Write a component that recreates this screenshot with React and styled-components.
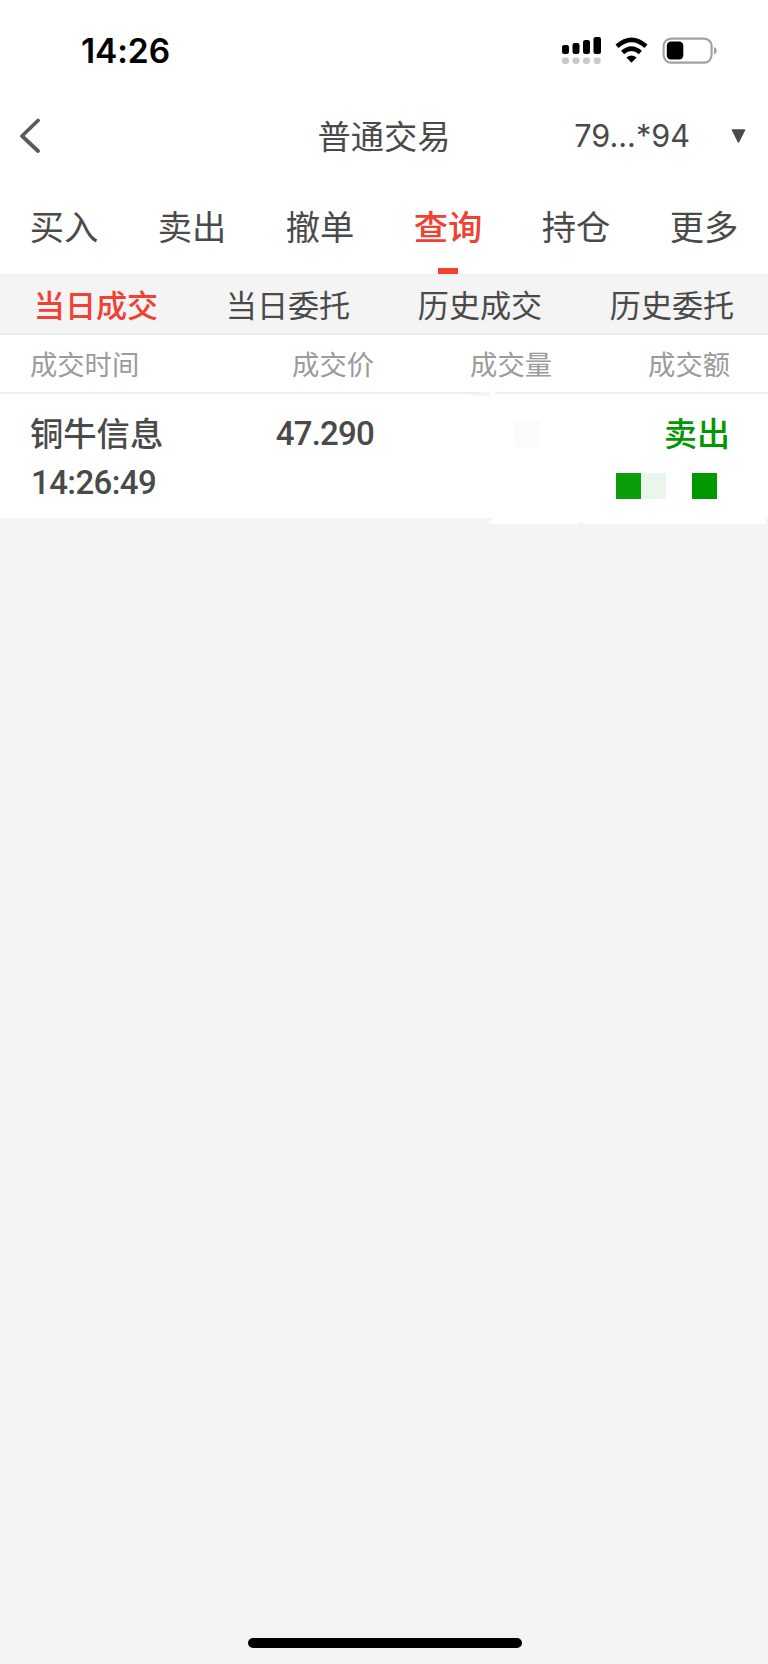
import React from "react";
import styled, { createGlobalStyle } from "styled-components";

const GlobalStyle = createGlobalStyle`
  * { box-sizing: border-box; }
  body {
    margin: 0;
    background: #f4f4f4;
    color: #4a4a4a;
    font-family: Inter, "Noto Sans CJK SC", sans-serif;
  }
`;

const Screen = styled.main`
  width: 768px;
  height: 1664px;
  display: flex;
  flex-direction: column;
  overflow: hidden;
  background: #f4f4f4;
`;

const StatusBar = styled.header`
  height: 100px;
  flex: none;
  display: flex;
  align-items: center;
  justify-content: space-between;
  padding: 2px 51px 0 81px;
  background: #fff;
`;

const Clock = styled.time`
  font: 600 33.5px/40px Inter, sans-serif;
  letter-spacing: -0.1px;
  color: #000;
`;

const StatusIcons = styled.svg`
  width: 156px;
  height: 30px;
  display: block;
  margin-top: -3px;
`;

const NavBar = styled.nav`
  height: 80px;
  flex: none;
  display: grid;
  grid-template-columns: 1fr auto 1fr;
  align-items: center;
  padding: 0 22px 9px 18px;
  background: #fff;
`;

const BackButton = styled.button`
  width: 24px;
  height: 36px;
  padding: 0;
  border: 0;
  background: none;
  svg { display: block; }
`;

const Title = styled.h1`
  margin: 0;
  padding: 0 0 2px 4px;
  font: 400 33.3px/48px "Noto Sans CJK SC", sans-serif;
`;

const Account = styled.div`
  display: flex;
  align-items: center;
  justify-content: flex-end;
  gap: 41px;
  font: 400 30.6px/40px Inter, sans-serif;
  svg { display: block; }
`;

const Tabs = styled.div`
  height: 94px;
  flex: none;
  display: grid;
  grid-template-columns: repeat(6, 1fr);
  background: #fff;
`;

const Tab = styled.button`
  display: flex;
  flex-direction: column;
  align-items: center;
  justify-content: space-between;
  padding: 20px 0 0;
  border: 0;
  background: none;
  color: ${(p) => (p.$active ? "#f04134" : "#4a4a4a")};
  font: ${(p) => (p.$active ? 500 : 400)} 34.3px/50px "Noto Sans CJK SC", sans-serif;
`;

const TabMark = styled.span`
  width: 20px;
  height: 6px;
  background: #f04134;
`;

const SubTabs = styled.div`
  height: 61px;
  flex: none;
  display: grid;
  grid-template-columns: repeat(4, 1fr);
  border-top: 1px solid #ececec;
  border-bottom: 2px solid #ebebeb;
  background: #f4f4f4;
`;

const SubTab = styled.button`
  padding: 0 0 1px;
  border: 0;
  background: none;
  color: ${(p) => (p.$active ? "#f04134" : "#4a4a4a")};
  font: ${(p) => (p.$active ? 500 : 400)} 31.1px/46px "Noto Sans CJK SC", sans-serif;
`;

const columns = "146px 198px 178px 178px";

const ColumnHeads = styled.div`
  height: 59px;
  flex: none;
  display: grid;
  grid-template-columns: ${columns};
  align-items: center;
  padding: 0 38px 2px 30px;
  border-bottom: 2px solid #eee;
  background: #fff;
  color: #9b9b9b;
  font: 400 27.3px/40px "Noto Sans CJK SC", sans-serif;
`;

const HeadCell = styled.span`
  text-align: ${(p) => (p.$first ? "left" : "right")};
`;

const TradeRow = styled.section`
  position: relative;
  height: 124px;
  flex: none;
  display: grid;
  grid-template-columns: ${columns};
  grid-template-rows: 50px 50px;
  align-items: center;
  padding: 14px 38px 0 30px;
  background: #fff;
`;

const StockName = styled.span`
  white-space: nowrap;
  padding-bottom: 2px;
  font: 500 33.3px/48px "Noto Sans CJK SC", sans-serif;
`;

const Figure = styled.span`
  font: 500 33px/40px Roboto, sans-serif;
  letter-spacing: ${(p) => (p.$right ? "-0.8px" : "-0.6px")};
  text-align: ${(p) => (p.$right ? "right" : "left")};
  padding: ${(p) => (p.$right ? "2px 0 0" : "0 0 0 1px")};
  white-space: nowrap;
`;

const Side = styled.span`
  color: #090;
  text-align: right;
  padding-bottom: 2px;
  font: 500 33px/48px "Noto Sans CJK SC", sans-serif;
`;

const Mosaic = styled.span`
  grid-column: ${(p) => p.$column};
  justify-self: end;
  display: flex;
  margin: ${(p) => p.$margin};
`;

const Block = styled.i`
  width: 25.3px;
  height: 26px;
  background: ${(p) => p.$color};
`;

const RowEdge = styled.svg`
  position: absolute;
  left: 0;
  top: -4px;
  width: 768px;
  height: 136px;
  pointer-events: none;
`;

const HomeArea = styled.footer`
  margin-top: auto;
  display: flex;
  justify-content: center;
  padding: 0 0 16px 2px;
`;

const HomeBar = styled.div`
  width: 274px;
  height: 10px;
  border-radius: 5px;
  background: #000;
`;

const tabs = ["买入", "卖出", "撤单", "查询", "持仓", "更多"];
const subTabs = ["当日成交", "当日委托", "历史成交", "历史委托"];
const heads = ["成交时间", "成交价", "成交量", "成交额"];

export default function App() {
  return (
    <Screen>
      <GlobalStyle />
      <StatusBar>
        <Clock>14:26</Clock>
        <StatusIcons viewBox="561 35 156 30">
          <rect x="562" y="45" width="7" height="9" rx="2.2" />
          <rect x="572.5" y="43" width="7" height="11" rx="2.2" />
          <rect x="583" y="40" width="7" height="14" rx="2.2" />
          <rect x="593.5" y="37" width="7.5" height="17" rx="2.2" />
          <g fill="#c9c9c9">
            <rect x="562" y="57.5" width="7" height="6.5" rx="2.4" />
            <rect x="572.5" y="57.5" width="7" height="6.5" rx="2.4" />
            <rect x="583" y="57.5" width="7" height="6.5" rx="2.4" />
            <rect x="593.7" y="57.5" width="7" height="6.5" rx="2.4" />
          </g>
          <path d="M617 46.2Q631.5 33.4 646 46.2" fill="none" stroke="#000" strokeWidth="4.6" />
          <path d="M622.6 52.5Q631.5 44.6 640.4 52.5" fill="none" stroke="#000" strokeWidth="4.6" />
          <path d="M626.4 57.6Q631.5 53.2 636.6 57.6L631.5 62.8Z" />
          <rect x="663.6" y="38.6" width="48" height="24" rx="7.5" fill="none" stroke="#a0a0a0" strokeWidth="2.1" />
          <rect x="666.8" y="41.6" width="16.5" height="18" rx="4.2" />
          <path d="M714 47Q716.8 48 716.8 50.7T714 54.3Z" fill="#a0a0a0" />
        </StatusIcons>
      </StatusBar>
      <NavBar>
        <BackButton aria-label="返回">
          <svg width="24" height="36" viewBox="0 0 24 36" fill="none" stroke="#5a5a5a" strokeWidth="3.8" strokeLinecap="round" strokeLinejoin="round">
            <path d="M20 2.5L4 18L20 33" />
          </svg>
        </BackButton>
        <Title>普通交易</Title>
        <Account>
          <span>79...*94</span>
          <svg width="15" height="14" viewBox="0 0 15 14">
            <path d="M1.5 1H13.5L7.5 13Z" fill="#4a4a4a" stroke="#4a4a4a" strokeWidth="1.6" strokeLinejoin="round" />
          </svg>
        </Account>
      </NavBar>
      <Tabs>
        {tabs.map((t) => (
          <Tab key={t} $active={t === "查询"}>
            {t}
            {t === "查询" && <TabMark />}
          </Tab>
        ))}
      </Tabs>
      <SubTabs>
        {subTabs.map((t, i) => (
          <SubTab key={t} $active={i === 0}>{t}</SubTab>
        ))}
      </SubTabs>
      <ColumnHeads>
        {heads.map((h, i) => (
          <HeadCell key={h} $first={i === 0}>{h}</HeadCell>
        ))}
      </ColumnHeads>
      <TradeRow>
        <RowEdge viewBox="0 390 768 136">
          <path d="M490 391H495V396H490Z" fill="#fff" />
          <path d="M469 396Q478 392 490 391.5V396Z" fill="#f4f4f4" />
          <path d="M494 518H766V524H585L581 521L577 524H486Z" fill="#fff" />
        </RowEdge>
        <StockName>铜牛信息</StockName>
        <Figure $right>47.290</Figure>
        <Mosaic $column={3} $margin="2px 12px 0 0">
          <Block $color="#fbfbfb" />
        </Mosaic>
        <Side>卖出</Side>
        <Figure>14:26:49</Figure>
        <Mosaic $column={4} $margin="6px 13px 0 0">
          <Block $color="#0b9e0b" />
          <Block $color="#eaf6ec" />
          <Block $color="#fff" />
          <Block $color="#090" />
        </Mosaic>
      </TradeRow>
      <HomeArea>
        <HomeBar />
      </HomeArea>
    </Screen>
  );
}
